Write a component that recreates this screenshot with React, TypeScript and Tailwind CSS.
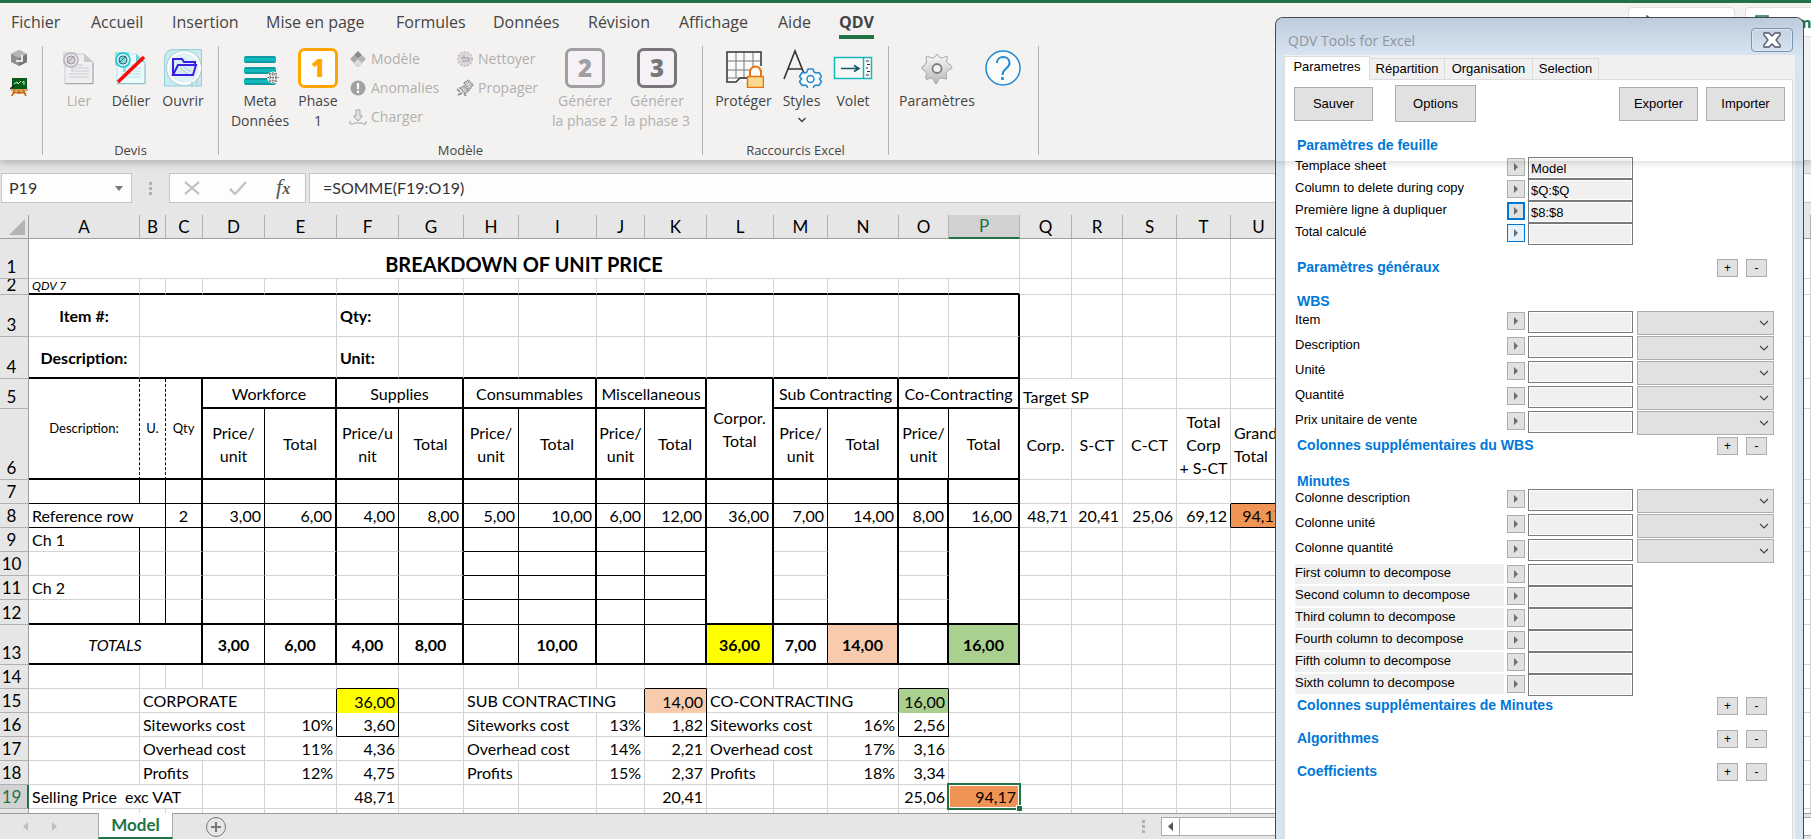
import React from "react";

type Cell = {
  t?: string;
  c?: number;
  r?: number;
  k?: string;
  sel?: boolean;
};
type Row = { n: string; h: string; right: string; bottom: string; cells: Cell[] };

const RIGHT: Record<string, string> = {
  ".": "",
  g: "border-r border-r-[#d4d4d4]",
  "1": "border-r border-r-black",
  "2": "border-r-2 border-r-black",
  d: "border-r border-r-black [border-right-style:dashed]",
};
const BOTTOM: Record<string, string> = {
  ".": "",
  g: "border-b border-b-[#d4d4d4]",
  "1": "border-b border-b-black",
  "2": "border-b-2 border-b-black",
};

const COLS: [string, string][] = [
  ["A", "w-[111px]"], ["B", "w-[26px]"], ["C", "w-[37px]"], ["D", "w-[62px]"],
  ["E", "w-[72px]"], ["F", "w-[62px]"], ["G", "w-[65px]"], ["H", "w-[55px]"],
  ["I", "w-[78px]"], ["J", "w-[48px]"], ["K", "w-[62px]"], ["L", "w-[67px]"],
  ["M", "w-[54px]"], ["N", "w-[71px]"], ["O", "w-[50px]"], ["P", "w-[71px]"],
  ["Q", "w-[52px]"], ["R", "w-[51px]"], ["S", "w-[54px]"], ["T", "w-[54px]"],
  ["U", "w-[56px]"], ["", ""],
];

const G22 = "gggggggggggggggggggggg";
const T16 = "2222222222222222gggggg";
const BODY = "1121212121221222gggggg";
const HEAD = "dd21212121221212gggggg";
const TOPBOX = "ggggggggggggggg2gggggg";
const DETAIL = "ggggggg1111.g.g.gggggg";
const BOXED = "gggg11ggg11gg11ggggggg";

const C = "text-center";
const R = "pr-[3px] text-right";
const L = "pl-[3px]";
const B = "text-center font-bold";
const e = (n: number): Cell[] => Array.from({ length: n }, () => ({}));
const c = (t: string, k = C, span = 1): Cell => ({ t, k, c: span });

const ROWS: Row[] = [
  { n: "1", h: "h-[40px]", right: G22, bottom: G22, cells: [c("BREAKDOWN OF UNIT PRICE", "text-center text-xl leading-6 font-bold pt-[10px]", 16), ...e(6)] },
  { n: "2", h: "h-[16px]", right: G22, bottom: T16, cells: [c("QDV 7", "pl-[3px] text-xs italic !leading-[12px]"), ...e(21)] },
  { n: "3", h: "h-[42px]", right: TOPBOX, bottom: G22, cells: [c("Item #:", B), { c: 4 }, c("Qty:", "pl-[3px] font-bold"), ...e(16)] },
  { n: "4", h: "h-[42px]", right: TOPBOX, bottom: T16, cells: [c("Description:", B), { c: 4 }, c("Unit:", "pl-[3px] font-bold"), ...e(16)] },
  {
    n: "5", h: "h-[30px]", right: HEAD, bottom: T16,
    cells: [
      { t: "Description:", r: 2, k: "text-center text-[13px]" }, { t: "U.", r: 2, k: "text-center text-[13px]" }, { t: "Qty", r: 2, k: "text-center text-[13px]" },
      c("Workforce", C, 2), c("Supplies", C, 2), c("Consummables", C, 2), c("Miscellaneous", C, 2),
      { t: "Corpor.\nTotal", r: 2, k: C }, c("Sub Contracting", C, 2), c("Co-Contracting", C, 2),
      c("Target SP", "pl-[3px] align-bottom", 2), ...e(4),
    ],
  },
  {
    n: "6", h: "h-[71px]", right: HEAD, bottom: T16,
    cells: [
      c("Price/\nunit"), c("Total"), c("Price/u\nnit"), c("Total"), c("Price/\nunit"), c("Total"), c("Price/\nunit"), c("Total"),
      c("Price/\nunit"), c("Total"), c("Price/\nunit"), c("Total"), c("Corp."), c("S-CT"), c("C-CT"), c("Total\nCorp\n+ S-CT"), c("Grand\nTotal", L), {},
    ],
  },
  { n: "7", h: "h-[24px]", right: BODY, bottom: "1111111111111111gggg1g", cells: e(22) },
  {
    n: "8", h: "h-[24px]", right: "1121212121221222ggg11g", bottom: "1111111111111111gggg1g",
    cells: [
      c("Reference row", L, 2), c("2"), c("3,00", R), c("6,00", R), c("4,00", R), c("8,00", R), c("5,00", R), c("10,00", R), c("6,00", R), c("12,00", R),
      c("36,00", R), c("7,00", R), c("14,00", R), c("8,00", R), c("16,00", "pr-[6px] text-right"), c("48,71", R), c("20,41", R), c("25,06", R), c("69,12", R),
      c("94,17", "bg-[#f09456] pr-[3px] text-right"), {},
    ],
  },
  { n: "9", h: "h-[24px]", right: BODY, bottom: DETAIL, cells: [c("Ch 1", L), ...e(21)] },
  { n: "10", h: "h-[24px]", right: BODY, bottom: DETAIL, cells: e(22) },
  { n: "11", h: "h-[24px]", right: BODY, bottom: DETAIL, cells: [c("Ch 2", L), ...e(21)] },
  { n: "12", h: "h-[25px]", right: BODY, bottom: "2222222111122222gggggg", cells: e(22) },
  {
    n: "13", h: "h-[40px]", right: BODY, bottom: T16,
    cells: [
      c("TOTALS", "text-center italic", 3), c("3,00", B), c("6,00", B), c("4,00", B), c("8,00", B), {}, c("10,00", B), {}, {},
      c("36,00", "bg-[#ffff00] text-center font-bold"), c("7,00", B), c("14,00", "bg-[#f8cbad] text-center font-bold"), {}, c("16,00", "bg-[#a9d08e] text-center font-bold"), ...e(6),
    ],
  },
  { n: "14", h: "h-[24px]", right: G22, bottom: "ggggg1gggg1ggg1ggggggg", cells: e(22) },
  {
    n: "15", h: "h-[24px]", right: BOXED, bottom: "ggggg.gggg.ggg.ggggggg",
    cells: [
      {}, c("CORPORATE", L, 3), {}, c("36,00", "bg-[#ffff00] pr-[3px] text-right"), {}, c("SUB CONTRACTING", L, 3), c("14,00", "bg-[#f8cbad] pr-[3px] text-right"),
      c("CO-CONTRACTING", L, 3), c("16,00", "bg-[#a9d08e] pr-[3px] text-right"), ...e(7),
    ],
  },
  {
    n: "16", h: "h-[24px]", right: BOXED, bottom: "ggggg1gggg1ggg1ggggggg",
    cells: [{}, c("Siteworks cost", L, 3), c("10%", R), c("3,60", R), {}, c("Siteworks cost", L, 2), c("13%", R), c("1,82", R), c("Siteworks cost", L, 2), c("16%", R), c("2,56", R), ...e(7)],
  },
  {
    n: "17", h: "h-[24px]", right: G22, bottom: G22,
    cells: [{}, c("Overhead cost", L, 3), c("11%", R), c("4,36", R), {}, c("Overhead cost", L, 2), c("14%", R), c("2,21", R), c("Overhead cost", L, 2), c("17%", R), c("3,16", R), ...e(7)],
  },
  {
    n: "18", h: "h-[24px]", right: G22, bottom: G22,
    cells: [{}, c("Profits", L, 2), {}, c("12%", R), c("4,75", R), {}, c("Profits", L), {}, c("15%", R), c("2,37", R), c("Profits", L), {}, c("18%", R), c("3,34", R), ...e(7)],
  },
  {
    n: "19", h: "h-[24px]", right: G22, bottom: G22,
    cells: [c("Selling Price  exc VAT", L, 3), {}, {}, c("48,71", R), {}, {}, {}, {}, c("20,41", R), {}, {}, {}, c("25,06", R), { t: "94,17", k: "bg-[#f09456] pr-[3px] text-right", sel: true }, ...e(6)],
  },
  { n: "", h: "h-[24px]", right: G22, bottom: G22, cells: e(22) },
];

function Sheet() {
  return (
    <table className="w-full table-fixed border-separate border-spacing-0 bg-white font-['Lato',sans-serif] text-base leading-[23px] text-black">
      <colgroup>
        <col className="w-[29px]" />
        {COLS.map(([n, w], i) => <col key={n + i} className={w} />)}
      </colgroup>
      <thead>
        <tr className="h-[24px] bg-[#e6e6e6] text-[17px] leading-5">
          <th className="border-r border-b border-[#9f9f9f] p-0">
            <svg className="mr-[3px] ml-auto block" width="16" height="16" viewBox="0 0 16 16"><path d="M16 0v16H0z" fill="#b4b4b4" /></svg>
          </th>
          {COLS.map(([n], i) => (
            <th key={n + i} scope="col" className={n === "P" ? "border-r border-b-2 border-r-[#b0b0b0] border-b-[#217346] bg-[#d2d2d2] p-0 font-normal text-[#217346]" : "border-r border-b border-r-[#b0b0b0] border-b-[#9f9f9f] p-0 font-normal"}>{n}</th>
          ))}
        </tr>
      </thead>
      <tbody>
        {ROWS.map((row, ri) => {
          let pos = row.n === "6" ? 3 : 0;
          return (
            <tr key={ri} className={row.h}>
              <th scope="row" className={row.n === "19" ? "border-r-2 border-b border-r-[#217346] border-b-[#b0b0b0] bg-[#d2d2d2] p-0 pr-[4px] align-bottom text-[17px] font-normal text-[#217346]" : "border-r border-b border-r-[#9f9f9f] border-b-[#b0b0b0] bg-[#e6e6e6] p-0 pr-[5px] align-bottom text-[17px] font-normal"}>
                {row.n === "2" ? <div className="flex h-[15px] items-end overflow-hidden"><span className="w-full leading-[18px]">2</span></div> : row.n}
              </th>
              {row.cells.map((cell, ci) => {
                if (row.n === "6" && pos === 11) pos = 12;
                pos += cell.c ?? 1;
                const last = pos - 1;
                return (
                  <td key={ci} colSpan={cell.c} rowSpan={cell.r} className={`p-0 whitespace-pre ${cell.sel ? "relative" : ""} ${RIGHT[row.right[last]]} ${BOTTOM[row.bottom[last]]} ${cell.k ?? ""}`}>
                    {cell.t}
                    {cell.sel && (
                      <span className="absolute -top-[2px] -right-[2px] -bottom-[2px] -left-[2px] border-2 border-[#217346] shadow-[inset_0_0_0_1px_white]">
                        <span className="absolute -right-[3px] -bottom-[3px] h-[6px] w-[6px] border-t border-l border-white bg-[#217346]" />
                      </span>
                    )}
                  </td>
                );
              })}
            </tr>
          );
        })}
      </tbody>
    </table>
  );
}

/* ---------- ribbon icons ---------- */

function DocIcon({ cut }: { cut?: boolean }) {
  const a = cut ? "#1cc3cf" : "#b9b6bb";
  const f = cut ? "#e9fbfc" : "#f1eef2";
  const l = cut ? "#bcdfe6" : "#cfccd1";
  return (
    <svg width="40" height="40" viewBox="0 0 40 40" fill="none">
      <path d="M6 6h19l9 8v22H6z" fill={f} stroke={l} />
      <path d="M6 35.500h28V15" stroke={cut ? "#93bfc6" : "#aaa7ac"} />
      <path d="M25 6l9 8h-9z" fill={a} opacity=".65" />
      <path d="M16 20h14M16 23h14M10 26h20M10 29h20M16 17h8" stroke={l} />
      <path d="M4 4h14v14l-3 1v5h-3v-5l-8-2z" fill={cut ? "#8ee3ea" : "#dddadf"} />
      <circle cx="12" cy="12" r="7" fill={cut ? "#c7f2f5" : "#e9e6ea"} stroke={a} strokeWidth="1.500" />
      <circle cx="12" cy="12" r="4" fill={cut ? "#7fdce4" : "#d5d2d7"} stroke={cut ? "#36606a" : "#9b989d"} />
      <path d="M8 15l7-7" stroke={cut ? "#36606a" : "#9b989d"} />
      {cut && <path d="M7 34L33 9" stroke="#fb0a0a" strokeWidth="3.500" />}
    </svg>
  );
}
function OpenIcon() {
  return (
    <svg width="40" height="40" viewBox="0 0 40 40" fill="none">
      <path d="M1.500 38V11Q1.500 1.500 11 1.500h27.500V38z" fill="#c9ebef" stroke="#8fd3da" />
      <circle cx="21" cy="20" r="16" fill="#e2f1f4" stroke="#fff" strokeWidth="2.500" />
      <circle cx="21" cy="20" r="17.500" stroke="#a9cdd4" />
      <path d="M29 33v6M34 30v9" stroke="#9ccdd4" />
      <path d="M10 27V11h9l2 3h11v3M10 27l5-10h18l-3 10z" stroke="#3a1fe0" strokeWidth="2" fill="#d5eef1" />
      <path d="M17 20l8 6M20 18l8 6" stroke="#b4c9d6" />
    </svg>
  );
}
function BarsIcon() {
  return (
    <svg width="40" height="40" viewBox="0 0 40 40">
      {[8, 19, 30].map((y) => (
        <g key={y}><rect x="4" y={y} width="32" height="7" rx="2" fill="#11b9bd" /><path d={`M5 ${y + 1}h30M5 ${y + 6}h30`} stroke="#0c7f86" strokeWidth="1.200" /></g>
      ))}
      <circle cx="33" cy="29.500" r="6" fill="#f3f2f1" />
      <path d="M33 24v11M27.500 29.500h11M29 26h8M29 33h8M30 25v9M36 25v9" stroke="#555" strokeDasharray="1.500 1" />
    </svg>
  );
}
function NumIcon({ n, border, color, bg }: { n: string; border: string; color: string; bg: string }) {
  return (
    <svg width="40" height="40" viewBox="0 0 40 40">
      <rect x="1.500" y="1.500" width="37" height="37" rx="5" fill={bg} stroke={border} strokeWidth="3" />
      <text x="20" y="29" textAnchor="middle" fontFamily="Open Sans" fontWeight="800" fontSize="24" fill={color}>{n}</text>
    </svg>
  );
}
function ProtectIcon() {
  return (
    <svg width="40" height="40" viewBox="0 0 40 40" fill="none">
      <path d="M3 4h34v30H20l-3-3-6 4H3z" fill="#fafafa" />
      <path d="M3 13h34M3 22h34M3 30h22M12 4v26M20 4v26M29 4v16" stroke="#777" />
      <path d="M24 30h-8l-4 4H3V4h34v14" stroke="#333" strokeWidth="1.500" />
      <path d="M26 29v-5a5.500 5.500 0 0 1 11 0v5" stroke="#e8730c" strokeWidth="2" fill="#fafafa" />
      <rect x="23.500" y="28.500" width="16" height="11" fill="#f9d98b" stroke="#e8730c" strokeWidth="1.500" />
    </svg>
  );
}
function StylesIcon() {
  return (
    <svg width="40" height="40" viewBox="0 0 40 40" fill="none">
      <path d="M2 31L13 3l10 25M6 21h14" stroke="#333" strokeWidth="1.600" />
      <path d="M26 21h5l1 3 2 1 3-.5 2.500 4-2 2.500 2 2.500-2.500 4-3-.5-2 1-1 3h-5l-1-3-2-1-3 .5-2.500-4 2-2.500-2-2.500 2.500-4 3 .5 2-1z" fill="#fafafa" stroke="#1f8ad2" strokeWidth="1.500" strokeLinejoin="round" />
      <circle cx="28.500" cy="31" r="3.500" fill="#fafafa" stroke="#1f8ad2" strokeWidth="1.500" />
    </svg>
  );
}
function PaneIcon() {
  return (
    <svg width="40" height="40" viewBox="0 0 40 40" fill="none">
      <rect x="1.500" y="9.500" width="37" height="21" stroke="#14b8bb" strokeWidth="1.500" fill="#f7f7f7" />
      <path d="M30.500 9v22" stroke="#14b8bb" strokeWidth="1.500" />
      <path d="M8 20.500h17M21 17.500l5 3-5 3" stroke="#0d5c66" strokeWidth="1.600" />
      <path d="M33 13h3M34 16.500h3M33 20h2M34 23.500h3M33 27h3" stroke="#333" />
    </svg>
  );
}
function GearIcon() {
  return (
    <svg width="40" height="40" viewBox="0 0 40 40">
      <defs><linearGradient id="gear" x1="0" y1="0" x2="0" y2="1"><stop offset="0" stopColor="#fafafa" /><stop offset="1" stopColor="#b9b9b9" /></linearGradient></defs>
      <path d="M20 6q2 4 4 4t6-2q1 1-.500 5 0 2 4.500 4.500 1 1 1 2.500-6 3-6 5 1 5 .500 6-5-1-6-1-2 0-3.500 5-1 .5-2 0-1.500-5-3.500-5-1 0-5 1.500-1.500-1.500 0-6 0-2-4.500-4.500v-2Q9.500 16 9.500 14 8.500 9 10 8q4 2 6 2t4-4z" fill="url(#gear)" stroke="#a6a6a6" strokeLinejoin="round" />
      <circle cx="20" cy="20.500" r="4.500" fill="#f3f2f1" stroke="#808080" strokeWidth="1.800" />
    </svg>
  );
}
function HelpIcon() {
  return (
    <svg width="40" height="40" viewBox="0 0 40 40" fill="none" stroke="#1f8ad2">
      <circle cx="20" cy="20" r="17" fill="#fbfbfb" strokeWidth="1.500" />
      <path d="M14 15c0-8 12.500-8 12.500 0 0 6-7 5-7 12" strokeWidth="2" /><path d="M19.500 29v3" strokeWidth="2.500" />
    </svg>
  );
}
function SmallIcon({ kind }: { kind: string }) {
  return (
    <svg className="shrink-0" width="18" height="18" viewBox="0 0 18 18" fill="none">
      {kind === "cube" && <><path d="M9 1l8 4v8l-8 4-8-4V5z" fill="#8f8f8f" /><path d="M9 1l8 4-8 4-8-4z" fill="#b5b5b5" /><path d="M9 9v8l8-4V5z" fill="#777" /><path d="M6 12h6V6" stroke="#e8e8e8" strokeWidth="2" /></>}
      {kind === "board" && <><path d="M5 11l-3 7M13 11l3 7M9 12v4M3 14.500h12" stroke="#c46a14" strokeWidth="1.800" /><rect x="2" y="0" width="15" height="11" fill="#075c16" /><path d="M4 6l3-2 1 2 3-3M12 5l2-2v4" stroke="#c9f2cd" /><path d="M0 11l4-3" stroke="#222" strokeWidth="1.500" /><path d="M1 12h17" stroke="#d98222" strokeWidth="1.500" /></>}
      {kind === "model" && <><path d="M9 1l4 4-4 4-4-4z" fill="#8d8d8d" /><path d="M5 5l4 4-4 4-4-4z" fill="#a9a9a9" /><path d="M13 5l4 4-4 4-4-4z" fill="#b5b5b5" /><path d="M9 9l4 4-4 4-4-4z" fill="#ddd" stroke="#b5b5b5" strokeWidth=".6" /></>}
      {kind === "alert" && <><circle cx="9" cy="9" r="7.500" fill="#a2a2a2" /><path d="M9 4v6M9 11.500V14" stroke="#fff" strokeWidth="2.200" /></>}
      {kind === "load" && <><path d="M7 2h4v6h2.500L9 13 4.500 8H7z" fill="#e4e4e4" stroke="#a5a5a5" /><path d="M1 13v3h3l1-1h8l1 1h3v-3" stroke="#a5a5a5" /></>}
      {kind === "clean" && <><circle cx="9" cy="9" r="7" fill="#dcd8dd" stroke="#c5c1c6" strokeDasharray="2 1.500" strokeWidth="2" /><path d="M5 8h3V5M8 8h5v3H6" stroke="#9a979b" /></>}
      {kind === "spread" && <><path d="M8 4l4-3 5 5-4 5zM4 9l4-2 4 5-3 3z" stroke="#777" strokeDasharray="1 1" strokeWidth="1.500" fill="#ccc" /><path d="M1 10l3 3M2 16l4-2M8 15l2 2" stroke="#888" strokeWidth="1.500" /></>}
    </svg>
  );
}

function Big({ icon, label, w, dim }: { icon: React.ReactNode; label: string; w: string; dim?: boolean }) {
  return (
    <button className={`flex ${w} shrink-0 flex-col items-center ${dim ? "text-[#b1afad]" : "text-[#444]"}`}>
      {icon}
      <span className="mt-[3px] text-center leading-5 whitespace-pre">{label}</span>
    </button>
  );
}
function Small({ kind, label }: { kind: string; label: string }) {
  return <button className="flex h-[29px] items-center gap-1 text-[#b1afad]"><SmallIcon kind={kind} />{label}</button>;
}
function Group({ w, title, children }: { w: string; title: string; children?: React.ReactNode }) {
  return (
    <section className={`flex ${w} h-[109px] shrink-0 flex-col justify-between border-r border-[#b5b3b1]`}>
      <div className="flex pt-[2px]">{children}</div>
      <div className="text-center text-[13px] leading-[10px] text-[#444]">{title}</div>
    </section>
  );
}

function Ribbon() {
  const tabs = [
    ["Fichier", "w-[80px]"], ["Accueil", "w-[81px]"], ["Insertion", "w-[94px]"], ["Mise en page", "w-[130px]"], ["Formules", "w-[97px]"],
    ["Données", "w-[95px]"], ["Révision", "w-[91px]"], ["Affichage", "w-[99px]"], ["Aide", "w-[61px]"],
  ];
  return (
    <header className="relative z-10 border-t-[3px] border-[#217346] bg-[#f3f2f1] shadow-[0_2px_9px_rgba(0,0,0,0.28)]">
      <nav className="flex h-[43px] pl-[11px] text-base leading-[38px] text-[#444]">
        {tabs.map(([t, w]) => <a key={t} href="#" className={`${w} shrink-0 whitespace-nowrap`}>{t}</a>)}
        <a href="#" className="h-[36px] border-b-4 border-[#217346] font-bold">QDV</a>
        <div className="ml-auto flex h-[34px] gap-[10px] pt-1 text-[15px] leading-7 font-bold text-[#217346]">
          <button className="flex w-[107px] items-center gap-2 rounded-sm border border-[#e1dfdd] bg-white pl-[11px]">
            <svg width="14" height="14" viewBox="0 0 14 14" fill="none" stroke="#217346" strokeWidth="1.500"><path d="M7 1l5 4-5 4V6.500Q3 6.500 1 11q0-7 6-7.500z" /></svg>Partager
          </button>
          <button className="flex w-[66px] items-center gap-[9px] overflow-hidden rounded-l-sm border border-r-0 border-[#e1dfdd] bg-white pl-[9px]">
            <svg className="shrink-0" width="14" height="14" viewBox="0 0 14 14" fill="none" stroke="#217346" strokeWidth="1.500"><path d="M1 1h12v9H6l-3 3v-3H1z" /></svg>Commentaires
          </button>
        </div>
      </nav>
      <div className="flex h-[114px] text-sm">
        <div className="flex h-[109px] w-[43px] shrink-0 flex-col items-center gap-[11px] border-r border-[#b5b3b1] pt-[3px] pr-[4px]">
          <button aria-label="Modèle 3D"><SmallIcon kind="cube" /></button>
          <button aria-label="Tableau"><SmallIcon kind="board" /></button>
        </div>
        <Group w="w-[176px]" title="Devis">
          <div className="w-[10px] shrink-0" />
          <Big w="w-[52px]" icon={<DocIcon />} label="Lier" dim />
          <Big w="w-[52px]" icon={<DocIcon cut />} label="Délier" />
          <Big w="w-[52px]" icon={<OpenIcon />} label="Ouvrir" />
        </Group>
        <Group w="w-[484px]" title="Modèle">
          <div className="w-[8px] shrink-0" />
          <Big w="w-[66px]" icon={<BarsIcon />} label={"Meta\nDonnées"} />
          <Big w="w-[50px]" icon={<NumIcon n="1" border="#ffa500" color="#ffa500" bg="#fff" />} label={"Phase\n1"} />
          <div className="-mt-1 ml-[6px] flex w-[107px] flex-col"><Small kind="model" label="Modèle" /><Small kind="alert" label="Anomalies" /><Small kind="load" label="Charger" /></div>
          <div className="-mt-1 flex w-[93px] flex-col"><Small kind="clean" label="Nettoyer" /><Small kind="spread" label="Propager" /></div>
          <Big w="w-[72px]" icon={<NumIcon n="2" border="#a09fa1" color="#a09fa1" bg="#f5f1f6" />} label={"Générer\nla phase 2"} dim />
          <Big w="w-[72px]" icon={<NumIcon n="3" border="#777" color="#777" bg="#f5f1f6" />} label={"Générer\nla phase 3"} dim />
        </Group>
        <Group w="w-[186px]" title="Raccourcis Excel">
          <div className="w-[9px] shrink-0" />
          <Big w="w-[63px]" icon={<ProtectIcon />} label="Protéger" />
          <div className="flex w-[53px] flex-col items-center">
            <Big w="w-[52px]" icon={<StylesIcon />} label="Styles" />
            <svg className="mt-[4px]" width="10" height="10" viewBox="0 0 10 10" fill="none"><path d="M1.500 3L5 6.500 8.500 3" stroke="#444" strokeWidth="1.500" /></svg>
          </div>
          <Big w="w-[50px]" icon={<PaneIcon />} label="Volet" />
        </Group>
        <Group w="w-[150px]" title="">
          <div className="w-[8px] shrink-0" />
          <Big w="w-[80px]" icon={<GearIcon />} label="Paramètres" />
          <button aria-label="Aide" className="ml-[6px] h-10"><HelpIcon /></button>
        </Group>
      </div>
    </header>
  );
}

function FormulaBar() {
  return (
    <div className="flex h-[55px] shrink-0 bg-[#e6e6e6] pt-[13px] pl-[1px] text-base text-[#333]">
      <div className="flex h-[30px] w-[131px] shrink-0 items-center border border-[#c6c6c6] bg-[#fdfdfd] pr-2">
        <input aria-label="Zone Nom" defaultValue="P19" className="w-full min-w-0 bg-transparent pl-[7px] font-['Lato',sans-serif] text-base outline-none" />
        <svg className="shrink-0" width="8" height="5" viewBox="0 0 8 5"><path d="M0 0h8L4 5z" fill="#777" /></svg>
      </div>
      <div className="flex h-[30px] w-[37px] shrink-0 flex-col items-center justify-center gap-[2px]">
        <i className="size-[3px] bg-[#b0b0b0]" /><i className="size-[3px] bg-[#b0b0b0]" /><i className="size-[3px] bg-[#b0b0b0]" />
      </div>
      <div className="flex h-[30px] w-[137px] shrink-0 items-center gap-[29px] border border-[#c6c6c6] bg-[#fdfdfd] pl-[14px]">
        <button aria-label="Annuler"><svg width="16" height="14" viewBox="0 0 16 14"><path d="M1 1l14 12M15 1L1 13" stroke="#bdbdbd" strokeWidth="2" /></svg></button>
        <button aria-label="Entrer"><svg width="18" height="14" viewBox="0 0 18 14" fill="none"><path d="M1 8l5 5L17 1" stroke="#c4c4c4" strokeWidth="2.500" /></svg></button>
        <button aria-label="Insérer une fonction" className="flex items-baseline font-['Liberation_Serif',serif] text-[22px] leading-6 text-[#555] italic"><span>f</span><span className="text-base font-bold">x</span></button>
      </div>
      <div className="ml-[3px] flex h-[30px] flex-1 border border-r-0 border-[#c6c6c6] bg-[#fdfdfd]">
        <input aria-label="Barre de formule" defaultValue="=SOMME(F19:O19)" className="w-full bg-transparent pl-[13px] font-['Lato',sans-serif] text-base outline-none" />
      </div>
    </div>
  );
}

function StatusBar() {
  return (
    <footer className="flex h-[26px] shrink-0 border-t border-[#9a9a9a] bg-[#e6e6e6]">
      <div className="flex w-[98px] items-center gap-[24px] pl-[23px]">
        <button aria-label="Feuille précédente"><svg width="5" height="9" viewBox="0 0 5 9"><path d="M5 0v9L0 4.500z" fill="#c0c0c0" /></svg></button>
        <button aria-label="Feuille suivante"><svg width="5" height="9" viewBox="0 0 5 9"><path d="M0 0v9l5-4.500z" fill="#c0c0c0" /></svg></button>
      </div>
      <button className="-mt-px h-[26px] w-[75px] border-x border-b-2 border-x-[#ababab] border-b-[#217346] bg-white font-['Lato',sans-serif] text-[17px] leading-5 font-bold text-[#217346]">Model</button>
      <button aria-label="Nouvelle feuille" className="ml-[32px]">
        <svg width="22" height="22" viewBox="0 0 22 22" fill="none" stroke="#777"><circle cx="11" cy="11" r="9.500" /><path d="M11 6v10M6 11h10" strokeWidth="2" /></svg>
      </button>
      <div className="ml-auto flex w-[669px] items-center">
        <div className="flex w-[19px] flex-col gap-[2px]"><i className="size-[3px] bg-[#b0b0b0]" /><i className="size-[3px] bg-[#b0b0b0]" /><i className="size-[3px] bg-[#b0b0b0]" /></div>
        <button aria-label="Défiler à gauche" className="flex h-[19px] w-[19px] items-center justify-center border border-[#ababab] bg-white"><svg width="5" height="9" viewBox="0 0 5 9"><path d="M5 0v9L0 4.500z" fill="#555" /></svg></button>
        <div className="h-[19px] flex-1 border-y border-[#ababab] bg-white" />
      </div>
    </footer>
  );
}

/* ---------- tool window ---------- */

function FieldRow({ label, value = "", wide, shade, mark }: { label: string; value?: string; wide?: boolean; shade?: boolean; mark?: string }) {
  const id = "f-" + label.replace(/\W+/g, "-").toLowerCase();
  const btn = mark === "focus" ? "border-2 border-[#0078d7] bg-[#e1e1e1]" : mark === "hover" ? "border border-[#0078d7] bg-[#e5f1fb]" : "border border-[#adadad] bg-[#e1e1e1]";
  return (
    <div className={`flex items-start ${wide ? "h-[25px]" : "h-[22px]"}`}>
      <label htmlFor={id} className={`mr-[3px] h-5 w-[209px] leading-[17px] ${shade ? "bg-[#f0f0f0]" : ""}`}>{label}</label>
      <button aria-label={"Choisir " + label} className={`mt-px flex h-[18px] w-[18px] items-center justify-center ${btn}`}>
        <svg width="5" height="8" viewBox="0 0 5 8"><path d="M0 0v8l4-4z" fill="#6d6d6d" /></svg>
      </button>
      <input id={id} defaultValue={value} className="ml-[3px] h-[22px] w-[105px] border border-[#7a7a7a] bg-[#f0f0f0] pl-[2px] shadow-[inset_0_0_0_1px_white] outline-none" />
      {wide && (
        <div className="relative ml-1">
          <select aria-label={label + " : colonne"} className="block h-[24px] w-[137px] appearance-none border border-[#adadad] bg-[#e1e1e1]"><option></option></select>
          <svg className="pointer-events-none absolute top-[9px] right-[5px]" width="10" height="7" viewBox="0 0 10 7" fill="none"><path d="M1 1l4 4 4-4" stroke="#444" strokeWidth="1.200" /></svg>
        </div>
      )}
    </div>
  );
}
function Section({ title, k, pm }: { title: string; k: string; pm?: boolean }) {
  const b = "h-[18px] w-[21px] border border-[#adadad] bg-[#e1e1e1] text-xs leading-[16px]";
  return (
    <div className={`flex pl-[2px] ${pm ? "h-[18px]" : "h-4"} ${k}`}>
      <h2 className="text-sm leading-4 font-bold text-[#0078d7]">{title}</h2>
      {pm && <div className="ml-auto flex gap-2 pr-[25px]"><button className={b}>+</button><button className={b}>-</button></div>}
    </div>
  );
}

function ToolWindow() {
  const b = "h-[34px] w-[79px] border border-[#adadad] bg-[#e1e1e1]";
  return (
    <aside className="absolute top-[17px] right-[7px] bottom-0 z-20 flex w-[529px] flex-col overflow-hidden rounded-t-lg border border-b-0 border-[#444b55] bg-[#d7e4f2] font-['Liberation_Sans',sans-serif] text-[13px] text-black">
      <div className="flex h-[37px] shrink-0 justify-between bg-linear-to-b from-[#becbda] to-[#d7e4f2] pr-[10px] pl-[12px]">
        <h1 className="pt-[11px] font-['Open_Sans',sans-serif] text-sm leading-6 text-[#8f959c]">QDV Tools for Excel</h1>
        <button aria-label="Fermer" className="mt-[10px] flex h-6 w-[42px] items-center justify-center rounded-sm border border-[#7f92b3] shadow-[inset_0_0_0_1px_#dbe5f1]">
          <svg width="18" height="16" viewBox="0 0 18 16"><path d="M1 1h5l3 3 3-3h5v2l-4 5 4 5v2h-5l-3-3-3 3H1v-2l4-5-4-5z" fill="#fff" stroke="#535666" strokeWidth="1.300" /></svg>
        </button>
      </div>
      <div className="mx-2 flex min-h-0 flex-1 flex-col bg-[#f0f0f0] pr-[2px]">
        <div role="tablist" className="flex h-6 items-end leading-[20px]">
          <button role="tab" aria-selected="true" className="relative -mb-px h-[24px] w-[86px] border border-b-0 border-[#dcdcdc] bg-white pb-1 leading-[19px]">Parametres</button>
          <button role="tab" className="h-[21px] w-[75px] border-t border-r border-[#dcdcdc]">Répartition</button>
          <button role="tab" className="h-[21px] w-[88px] border-t border-r border-[#dcdcdc]">Organisation</button>
          <button role="tab" className="h-[21px] w-[66px] border-t border-r border-[#dcdcdc]">Selection</button>
        </div>
        <div className="flex-1 border border-b-0 border-[#dcdcdc] bg-white pl-[10px]">
          <div className="flex h-[42px] items-center pt-[5px] pr-[7px]">
            <button className={`${b} -ml-px`}>Sauver</button>
            <button className="ml-[22px] h-[37px] w-[81px] border border-[#adadad] bg-[#e1e1e1]">Options</button>
            <button className={`${b} ml-auto`}>Exporter</button>
            <button className={`${b} ml-2`}>Importer</button>
          </div>
          <Section title="Paramètres de feuille" k="mt-[15px] mb-1" />
          <FieldRow label="Templace sheet" value="Model" />
          <FieldRow label="Column to delete during copy" value="$Q:$Q" />
          <FieldRow label="Première ligne à dupliquer" value="$8:$8" mark="focus" />
          <FieldRow label="Total calculé" mark="hover" />
          <Section title="Paramètres généraux" pm k="mt-[14px]" />
          <Section title="WBS" k="mt-4 mb-[2px]" />
          {["Item", "Description", "Unité", "Quantité", "Prix unitaire de vente"].map((l) => <FieldRow key={l} label={l} wide />)}
          <Section title="Colonnes supplémentaires du WBS" pm k="mt-px" />
          <Section title="Minutes" k="mt-[18px]" />
          {["Colonne description", "Colonne unité", "Colonne quantité"].map((l) => <FieldRow key={l} label={l} wide />)}
          {["First", "Second", "Third", "Fourth", "Fifth", "Sixth"].map((l) => <FieldRow key={l} label={l + " column to decompose"} shade />)}
          <Section title="Colonnes supplémentaires de Minutes" pm k="mt-px" />
          <Section title="Algorithmes" pm k="mt-[15px]" />
          <Section title="Coefficients" pm k="mt-[15px]" />
        </div>
      </div>
      <div className="pointer-events-none absolute inset-x-0 top-[143px] h-[7px] bg-linear-to-b from-black/10 to-transparent" />
    </aside>
  );
}

export default function App() {
  return (
    <main className="relative flex h-screen flex-col overflow-hidden bg-[#e6e6e6] font-['Open_Sans',sans-serif]">
      <Ribbon />
      <FormulaBar />
      <div className="min-h-0 flex-1 overflow-hidden"><Sheet /></div>
      <StatusBar />
      <ToolWindow />
    </main>
  );
}
